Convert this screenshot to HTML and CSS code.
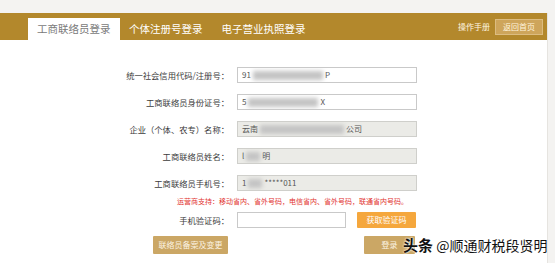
FILE: index.html
```html
<!DOCTYPE html>
<html lang="zh-CN">
<head>
<meta charset="utf-8">
<title>工商联络员登录</title>
<link rel="stylesheet" href="styles.css">
</head>
<body>
<div class="page">
  <div class="bar">
    <div class="tabs">
      <div class="tab active">工商联络员登录</div>
      <div class="tab">个体注册号登录</div>
      <div class="tab">电子营业执照登录</div>
    </div>
    <div class="tools">
      <span class="manual">操作手册</span>
      <span class="home">返回首页</span>
    </div>
  </div>
  <div class="form">
    <div class="row">
      <label class="lbl">统一社会信用代码/注册号：</label>
      <div class="field">91<span class="blur w1"></span>P</div>
    </div>
    <div class="row">
      <label class="lbl">工商联络员身份证号：</label>
      <div class="field">5<span class="blur w2"></span>X</div>
    </div>
    <div class="row">
      <label class="lbl">企业（个体、农专）名称：</label>
      <div class="field ro">云南<span class="blur w3"></span>公司</div>
    </div>
    <div class="row">
      <label class="lbl">工商联络员姓名：</label>
      <div class="field ro">l<span class="blur w4"></span>明</div>
    </div>
    <div class="row">
      <label class="lbl">工商联络员手机号：</label>
      <div class="field ro">1<span class="blur w4"></span>*****011</div>
    </div>
    <div class="note">运营商支持：移动省内、省外号码，电信省内、省外号码，联通省内号码。</div>
    <div class="row">
      <label class="lbl">手机验证码：</label>
      <div class="field short"></div>
      <span class="btn orange">获取验证码</span>
    </div>
    <div class="actions">
      <span class="btn tan wide">联络员备案及变更</span>
      <span class="btn tan login">登录</span>
    </div>
  </div>
  <div class="watermark"><b>头条</b> @顺通财税段贤明</div>
</div>
</body>
</html>
```
FILE: styles.css
```css
html, body {
  margin: 0;
  padding: 0;
}
body {
  background: #f4f3f1;
  font-family: "Noto Sans CJK SC", "Noto Sans", sans-serif;
  width: 555px;
  height: 263px;
  overflow: hidden;
}
.page {
  position: relative;
  margin-top: 13px;
  width: 547px;
  height: 250px;
  background: #ffffff;
  border-right: 1px solid #e6e4e0;
}
.bar {
  height: 27px;
  background: #b3882c;
  display: flex;
  justify-content: space-between;
  align-items: flex-end;
}
.tabs {
  display: flex;
  align-items: flex-end;
  padding-left: 28px;
}
.tab {
  height: 22px;
  line-height: 22px;
  padding: 0 9px;
  font-size: 10.5px;
  color: #ffffff;
  letter-spacing: 0;
}
.tab + .tab {
  padding: 0 9.5px;
}
.tab.active {
  background: #ffffff;
  color: #7a7a7a;
}
.tools {
  display: flex;
  align-items: center;
  align-self: center;
  gap: 5px;
  padding-right: 4px;
}
.manual {
  font-size: 8px;
  color: #fff6e2;
}
.home {
  display: inline-block;
  width: 46px;
  height: 14px;
  line-height: 14px;
  text-align: center;
  font-size: 8px;
  color: #fff4dc;
  background: #cea55b;
  border: 1px solid #dcbc80;
}
.form {
  padding-top: 27px;
  display: flex;
  flex-direction: column;
}
.row {
  display: flex;
  align-items: center;
  height: 16px;
  margin-bottom: 11px;
}
.lbl {
  width: 229px;
  text-align: right;
  font-size: 8.3px;
  color: #3c3c3c;
  flex: none;
}
.field {
  margin-left: 8px;
  width: 171px;
  height: 14px;
  line-height: 14px;
  padding: 0 3px 0 4px;
  border: 1px solid #c9c9c9;
  background: #ffffff;
  font-size: 8px;
  color: #555555;
  display: flex;
  align-items: center;
  white-space: nowrap;
  overflow: hidden;
}
.field.ro {
  background: #ebebe7;
  border-color: #cfcfcb;
}
.field.short {
  width: 100px;
}
.blur {
  display: inline-block;
  height: 9px;
  background: #c4c4c4;
  filter: blur(2px);
  margin: 0 2px;
}
.w1 { width: 70px; }
.w2 { width: 70px; }
.w3 { width: 84px; }
.w4 { width: 14px; }
.note {
  margin-top: -7px;
  height: 12px;
  line-height: 12px;
  padding-left: 177px;
  font-size: 7px;
  color: #e2342f;
  margin-bottom: 5px;
  white-space: nowrap;
}
.btn {
  display: inline-block;
  height: 16px;
  line-height: 16px;
  text-align: center;
  font-size: 8px;
  color: #ffffff;
  border-radius: 1px;
}
.orange {
  margin-left: 11px;
  width: 59px;
  background: #f5a73d;
}
.actions {
  display: flex;
  margin-top: -3px;
  padding-left: 153px;
}
.tan {
  height: 18px;
  line-height: 18px;
  background: #cba765;
  color: #fbf3e3;
}
.wide {
  width: 75px;
}
.login {
  margin-left: 136px;
  width: 51px;
}
.watermark {
  position: absolute;
  left: 403px;
  top: 222px;
  font-size: 14px;
  line-height: 20px;
  color: #111111;
  white-space: nowrap;
  text-shadow: 0 0 2px #ffffff, 0 0 2px #ffffff;
  letter-spacing: 0;
}
.watermark b {
  font-weight: 700;
  font-size: 15px;
}
```
